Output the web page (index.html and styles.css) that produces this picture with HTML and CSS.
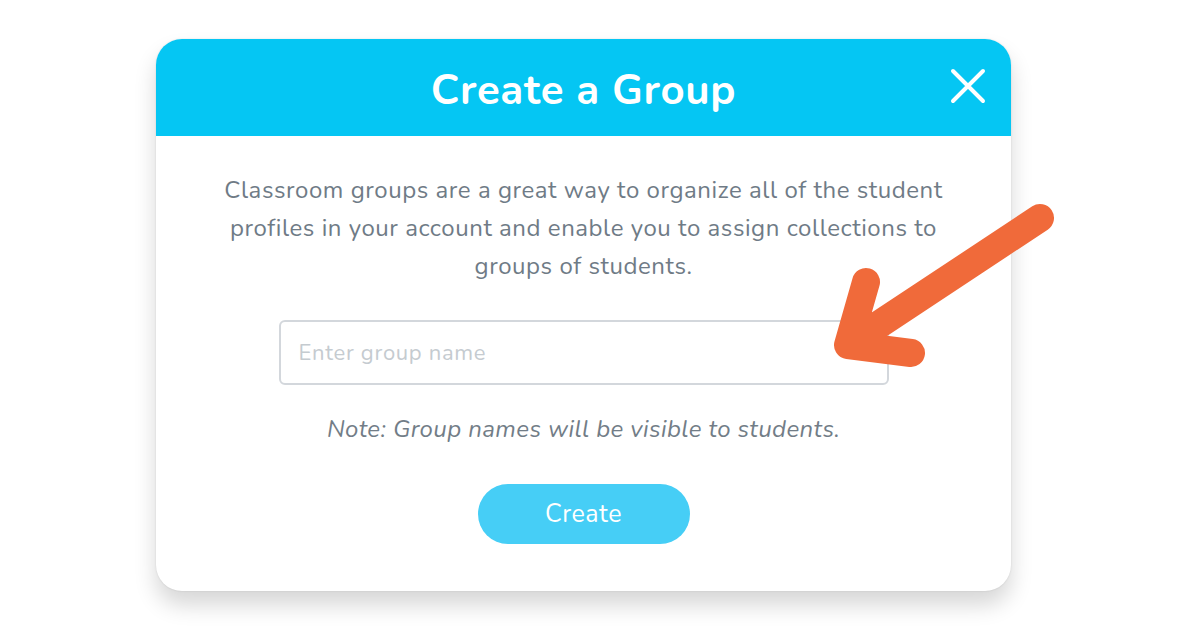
FILE: index.html
```html
<!DOCTYPE html>
<html>
<head>
<meta charset="utf-8">
<link rel="stylesheet" href="styles.css">
</head>
<body>
<div class="stage">
  <div class="modal">
    <div class="modal-header">
      <h1 class="title">Create a Group</h1>
      <button class="close" aria-label="Close">
        <svg width="36" height="36" viewBox="0 0 36 36"><path d="M3 3L33 33M33 3L3 33" stroke="#fff" stroke-width="4" stroke-linecap="round"/></svg>
      </button>
    </div>
    <div class="modal-body">
      <p class="intro">Classroom groups are a great way to organize all of the student<br>profiles in your account and enable you to assign collections to<br>groups of students.</p>
      <input class="field" type="text" placeholder="Enter group name">
      <p class="note">Note: Group names will be visible to students.</p>
      <button class="create">Create</button>
    </div>
  </div>
  <svg class="arrow" width="1200" height="630" viewBox="0 0 1200 630">
    <path d="M1040 218L848 345M866 282L848 345L911 353" fill="none" stroke="#f06a3a" stroke-width="28" stroke-linecap="round" stroke-linejoin="round"/>
  </svg>
</div>
</body>
</html>
```

FILE: styles.css
```css
html, body {
  margin: 0;
  padding: 0;
  background: #ffffff;
}
.stage {
  position: relative;
  width: 1200px;
  height: 630px;
  padding-top: 39px;
  box-sizing: border-box;
  font-family: "Nunito", "Lato", "Noto Sans", sans-serif;
}
.modal {
  margin-left: 156px;
  width: 855px;
  height: 552px;
  background: #fff;
  border-radius: 26px;
  box-shadow: 0 14px 22px rgba(0,0,0,0.16), 0 0 2px rgba(0,0,0,0.12);
  overflow: hidden;
  display: flex;
  flex-direction: column;
}
.modal-header {
  position: relative;
  height: 97px;
  background: #05c6f3;
  display: flex;
  align-items: center;
  justify-content: center;
}
.title {
  margin: 0;
  color: #fff;
  font-size: 42px;
  font-weight: 700;
  letter-spacing: 0.7px;
  padding-top: 5px;
}
.close {
  position: absolute;
  right: 25px;
  top: 29px;
  padding: 0;
  border: 0;
  background: none;
  width: 36px;
  height: 36px;
}
.modal-body {
  display: flex;
  flex-direction: column;
  align-items: center;
}
.intro {
  margin: 35px 0 0;
  text-align: center;
  color: #6f7b86;
  font-size: 24px;
  letter-spacing: 0.55px;
  line-height: 38px;
  white-space: nowrap;
}
.field {
  margin-top: 35px;
  width: 610px;
  height: 65px;
  box-sizing: border-box;
  border: 2px solid #d3d7dc;
  border-radius: 6px;
  padding: 0 18px;
  font-family: inherit;
  font-size: 22px;
  letter-spacing: 0.7px;
  color: #555;
  outline: none;
}
.field::placeholder {
  color: #c5cbd0;
}
.note {
  margin: 29px 0 0;
  color: #727d87;
  font-style: italic;
  font-size: 24px;
  letter-spacing: 0.4px;
  line-height: 30px;
}
.create {
  margin-top: 40px;
  width: 212px;
  height: 60px;
  border: 0;
  border-radius: 30px;
  background: #46cef6;
  color: #fff;
  font-family: inherit;
  font-size: 25px;
  letter-spacing: 0.5px;
}
.arrow {
  position: absolute;
  left: 0;
  top: 0;
  pointer-events: none;
}
```
